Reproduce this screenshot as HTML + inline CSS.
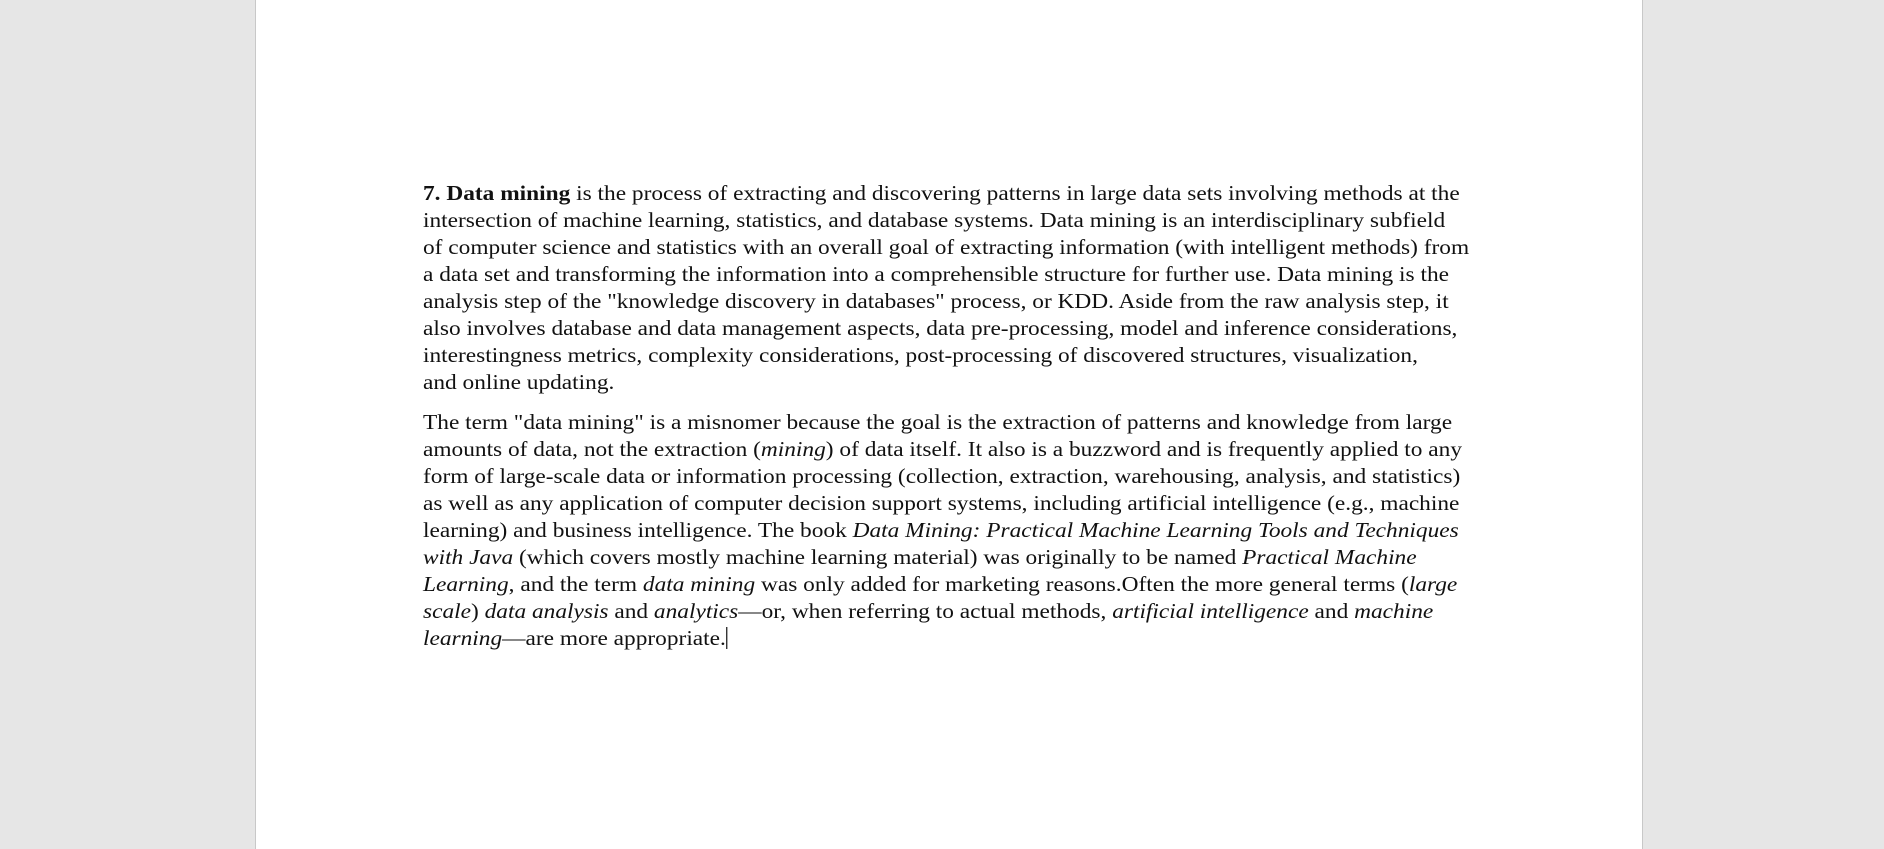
<!DOCTYPE html>
<html><head><meta charset="utf-8"><style>
html,body{margin:0;padding:0;}
body{width:1884px;height:849px;background:#e6e6e6;position:relative;overflow:hidden;font-family:"Liberation Serif","Times New Roman",serif;}
.page{position:absolute;left:255px;top:0;height:849px;background:#fff;border-left:1px solid #c8c8c8;border-right:1px solid #c8c8c8;width:1386px;}
.t{position:absolute;left:423px;font-size:20.8px;line-height:26.95px;color:#111;white-space:nowrap;transform:scaleX(1.123);transform-origin:0 0;}
.cur{display:inline-block;width:1px;height:22px;background:#000;vertical-align:-4px;}
</style></head><body>
<div class="page"></div>
<div class="t" style="top:181px"><b>7. Data mining</b> is the process of extracting and discovering patterns in large data sets involving methods at the<br>intersection of machine learning, statistics, and database systems. Data mining is an interdisciplinary subfield<br>of computer science and statistics with an overall goal of extracting information (with intelligent methods) from<br>a data set and transforming the information into a comprehensible structure for further use. Data mining is the<br>analysis step of the "knowledge discovery in databases" process, or KDD. Aside from the raw analysis step, it<br>also involves database and data management aspects, data pre-processing, model and inference considerations,<br>interestingness metrics, complexity considerations, post-processing of discovered structures, visualization,<br>and online updating.</div>
<div class="t" style="top:410px">The term "data mining" is a misnomer because the goal is the extraction of patterns and knowledge from large<br>amounts of data, not the extraction (<i>mining</i>) of data itself. It also is a buzzword and is frequently applied to any<br>form of large-scale data or information processing (collection, extraction, warehousing, analysis, and statistics)<br>as well as any application of computer decision support systems, including artificial intelligence (e.g., machine<br>learning) and business intelligence. The book <i>Data Mining: Practical Machine Learning Tools and Techniques</i><br><i>with Java</i> (which covers mostly machine learning material) was originally to be named <i>Practical Machine</i><br><i>Learning</i>, and the term <i>data mining</i> was only added for marketing reasons.Often the more general terms (<i>large</i><br><i>scale</i>) <i>data analysis</i> and <i>analytics</i>—or, when referring to actual methods, <i>artificial intelligence</i> and <i>machine</i><br><i>learning</i>—are more appropriate.<span class="cur"></span></div>
</body></html>
